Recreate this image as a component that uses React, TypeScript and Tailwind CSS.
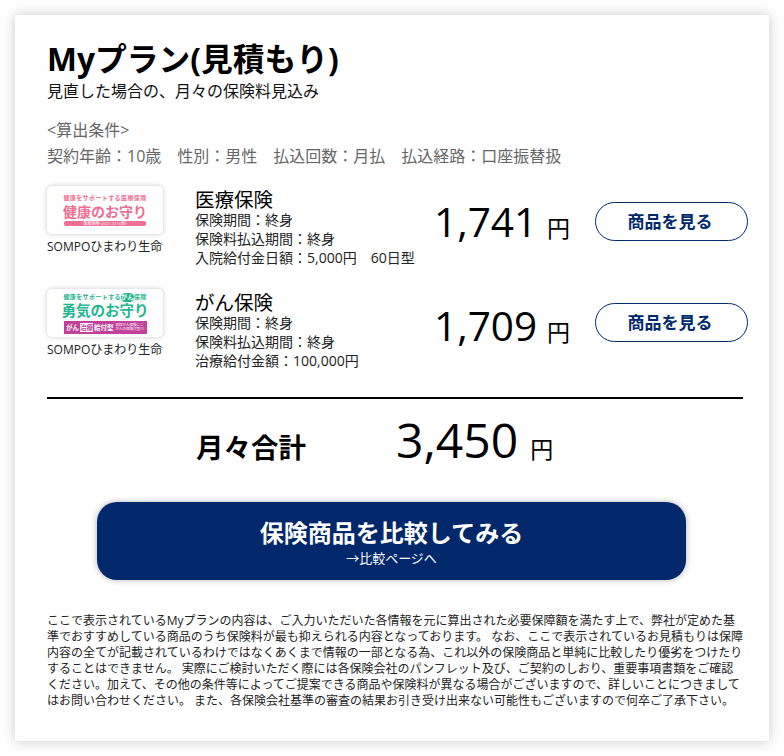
const FONT = "font-['Open_Sans','Noto_Sans_CJK_JP',sans-serif]"

function Tiny({ className, children }: { className: string; children: React.ReactNode }) {
  return <div className={`whitespace-nowrap text-center ${className}`}>{children}</div>
}

function KenkoLogo() {
  return (
    <div className="flex flex-col items-center">
      <Tiny className="text-[6px] leading-[9px] font-bold tracking-[0.4px] text-[#ee6f93]">健康をサポートする医療保険</Tiny>
      <Tiny className="text-[14px] leading-[17px] font-bold text-[#ee6f93]">健康のお守り</Tiny>
      <Tiny className="mt-[1px] w-[82px] h-[5px] rounded-[2px] bg-[#ee6f93] text-[4px] leading-[5px] text-white">
        医療保険 (2021-3110型)
      </Tiny>
    </div>
  )
}

function YukiLogo() {
  return (
    <div className="flex flex-col items-center">
      <Tiny className="text-[6px] leading-[9px] font-bold tracking-[0.4px] text-[#1fb58f]">
        健康をサポートする<span className="inline-block rounded-full bg-[#1fb58f] text-white">がん</span>保険
      </Tiny>
      <Tiny className="text-[14.5px] leading-[18px] font-bold text-[#1fb58f]">勇気のお守り</Tiny>
      <div className="mt-[1px] w-[83px] h-[13px] bg-[#c2409a] flex items-center justify-center gap-[2px] text-white whitespace-nowrap">
        <span className="text-[6.5px] leading-[13px] font-bold">
          がん<span className="mx-[1px] bg-white text-[#c2409a]">治療</span>給付型
        </span>
        <span className="text-[3.5px] leading-[4px]">
          <span className="block">初回がん保険にご</span>
          <span className="block">がんの保険付型(1)</span>
        </span>
      </div>
    </div>
  )
}

type PlanRowProps = {
  logo: React.ReactNode
  name: string
  lines: string[]
  price: string
  className: string
  priceClass: string
  buttonClass: string
}

function PlanRow({ logo, name, lines, price, className, priceClass, buttonClass }: PlanRowProps) {
  return (
    <div className={`flex ${className}`}>
      <div className="w-[116px] shrink-0">
        <div className="h-[48px] rounded-[5px] bg-white shadow-[0_0_5px_rgba(0,0,0,0.22)] flex items-center justify-center">{logo}</div>
        <p className="mt-[4px] text-[12px] leading-[18px] text-[#222] whitespace-nowrap">SOMPOひまわり生命</p>
      </div>
      <div className="ml-[32px] w-[239px] shrink-0 mt-[3px]">
        <h3 className="text-[19.5px] leading-[21px] text-black">{name}</h3>
        {lines.map((line) => (
          <p key={line} className="text-[14px] leading-[19px] text-[#222] whitespace-pre">{line}</p>
        ))}
      </div>
      <div className={`w-[161px] shrink-0 flex items-baseline ${priceClass}`}>
        <span className="text-[40.5px] leading-[62px] text-black">{price}</span>
        <span className="ml-[10px] text-[23px] text-black">円</span>
      </div>
      <button className={`shrink-0 w-[153px] h-[39px] pr-[3px] rounded-full border border-[#002a6c] text-[#002a6c] text-[17px] font-bold bg-white ${buttonClass}`}>
        商品を見る
      </button>
    </div>
  )
}

export default function App() {
  return (
    <div className={`w-[784px] h-[756px] bg-white p-[15px] ${FONT}`}>
      <div className="w-[754px] h-[726px] bg-white shadow-[0_0_12px_rgba(0,0,0,0.22)] pt-[22px] pl-[32px] pr-[26px]">
        <h1 className="text-[31.75px] leading-[44px] font-bold text-black whitespace-nowrap">Myプラン(見積もり)</h1>
        <p className="text-[16px] leading-[20px] text-[#111]">見直した場合の、月々の保険料見込み</p>
        <p className="mt-[16px] text-[16px] leading-[26px] text-[#666]">&lt;算出条件&gt;</p>
        <p className="text-[16px] leading-[26px] text-[#666] whitespace-pre">契約年齢：10歳　性別：男性　払込回数：月払　払込経路：口座振替扱</p>

        <PlanRow
          className="mt-[17px]"
          priceClass="pt-[5px]"
          buttonClass="mt-[16px]"
          logo={<KenkoLogo />}
          name="医療保険"
          lines={['保険期間：終身', '保険料払込期間：終身', '入院給付金日額：5,000円　60日型']}
          price="1,741"
        />
        <PlanRow
          className="mt-[22px]"
          priceClass="pt-[6px]"
          buttonClass="mt-[14px]"
          logo={<YukiLogo />}
          name="がん保険"
          lines={['保険期間：終身', '保険料払込期間：終身', '治療給付金額：100,000円']}
          price="1,709"
        />

        <div className="mt-[27px] border-t-2 border-black" />

        <div className="flex items-baseline pl-[149px] pt-[1px] h-[90px]">
          <span className="w-[200px] text-[27.5px] leading-[68px] font-bold text-black">月々合計</span>
          <span className="text-[48px] leading-[80px] text-black">3,450</span>
          <span className="ml-[12px] text-[23px] text-black">円</span>
        </div>

        <button className="mt-[13px] ml-[50px] block w-[589px] h-[78px] rounded-[20px] bg-[#00286a] shadow-[0_0_6px_rgba(0,0,0,0.3)] text-white">
          <span className="block text-[24px] leading-[34px] font-bold">保険商品を比較してみる</span>
          <span className="block text-[13px] leading-[16px]">→比較ページへ</span>
        </button>

        <p className="mt-[33px] text-[12px] leading-[16px] text-[#222]">
          ここで表示されているMyプランの内容は、ご入力いただいた各情報を元に算出された必要保障額を満たす上で、弊社が定めた基準でおすすめしている商品のうち保険料が最も抑えられる内容となっております。 なお、ここで表示されているお見積もりは保障内容の全てが記載されているわけではなくあくまで情報の一部となる為、これ以外の保険商品と単純に比較したり優劣をつけたりすることはできません。 実際にご検討いただく際には各保険会社のパンフレット及び、ご契約のしおり、重要事項書類をご確認ください。加えて、その他の条件等によってご提案できる商品や保険料が異なる場合がございますので、詳しいことにつきましてはお問い合わせください。 また、各保険会社基準の審査の結果お引き受け出来ない可能性もございますので何卒ご了承下さい。
        </p>
      </div>
    </div>
  )
}
